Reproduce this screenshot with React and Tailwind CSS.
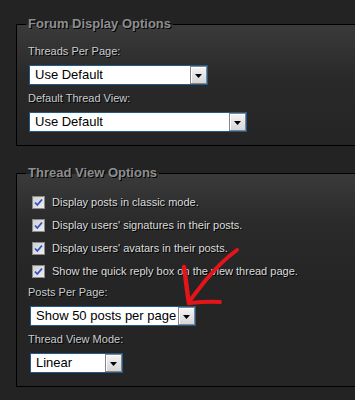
const shadow = "[text-shadow:1px_1px_0_#000]";

function Select({ className, value }) {
  return (
    <div className={`flex h-[20px] border border-[#1f5a8c] bg-white ${className}`}>
      <div className="flex-1 overflow-hidden whitespace-nowrap pl-[5px] text-[13px] leading-[18px] text-black">
        {value}
      </div>
      <div className="flex w-[17px] items-center justify-center border border-[#858585] bg-[linear-gradient(180deg,#f4f4f4,#d6d6d6)] shadow-[inset_1px_1px_0_#fff]">
        <svg width="7" height="4" viewBox="0 0 7 4" className="mt-[1px]">
          <path d="M0 0H7L3.5 4Z" fill="#000" />
        </svg>
      </div>
    </div>
  );
}

function Label({ children, className = "" }) {
  return (
    <div className={`text-[11px] leading-[13px] text-[#c9ccce] ${shadow} ${className}`}>
      {children}
    </div>
  );
}

function Check({ children }) {
  return (
    <div className="flex h-[23px] items-center">
      <span className="ml-[4px] flex h-[13px] w-[13px] items-center justify-center border border-[#8a8a8a] bg-[linear-gradient(135deg,#d0d0d0,#eeeeee)]">
        <svg width="9" height="9" viewBox="0 0 9 9">
          <path d="M1 4.5L3.3 7L8 1.5" fill="none" stroke="#2f50c8" strokeWidth="1.8" />
        </svg>
      </span>
      <span className={`ml-[7px] text-[11px] leading-[13px] text-[#dcdcdc] ${shadow}`}>
        {children}
      </span>
    </div>
  );
}

function Box({ title, className = "", children }) {
  return (
    <fieldset
      className={`w-[400px] border border-black bg-[linear-gradient(180deg,#3a3a3a_0px,#2a2a2a_50px,#252525_110px)] pl-[9px] ${className}`}
    >
      <legend className={`px-[2px] text-[13px] font-bold leading-[16px] text-[#8e8e8e] ${shadow}`}>
        {title}
      </legend>
      {children}
    </fieldset>
  );
}

export default function App() {
  return (
    <div className="relative h-[400px] w-[355px] overflow-hidden bg-[#232323] pl-[16px] pt-[16px] font-['Liberation_Sans',Arial,sans-serif]">
      <Box title="Forum Display Options" className="pb-[13px] pt-[13px]">
        <div className="pl-[2px]">
          <Label>Threads Per Page:</Label>
          <Select className="ml-[1px] mt-[7px] w-[179px]" value="Use Default" />
          <Label className="mt-[7px]">Default Thread View:</Label>
          <Select className="ml-[1px] mt-[7px] w-[218px]" value="Use Default" />
        </div>
      </Box>

      <Box title="Thread View Options" className="mt-[19px] pb-[13px] pt-[10px]">
        <div className="pl-[2px]">
          <Check>Display posts in classic mode.</Check>
          <Check>Display users' signatures in their posts.</Check>
          <Check>Display users' avatars in their posts.</Check>
          <Check>Show the quick reply box on the view thread page.</Check>
          <Label className="mt-[3px]">Posts Per Page:</Label>
          <Select className="ml-[2px] mt-[7px] w-[166px]" value="Show 50 posts per page" />
          <Label className="mt-[7px]">Thread View Mode:</Label>
          <Select className="ml-[2px] mt-[7px] w-[93px]" value="Linear" />
        </div>
      </Box>

      {/* hand-drawn red arrow */}
      <svg className="pointer-events-none absolute left-0 top-0" width="355" height="400">
        <g fill="none" stroke="#e3141a" strokeLinecap="round" strokeLinejoin="round">
          <path d="M237 250 C226 258 214 270 205 281 C198 290 193 296 189 302" strokeWidth="4" />
          <path d="M184 267 C186 280 187 292 189 303" strokeWidth="4.5" />
          <path d="M189 303 C199 302 210 301 220 302" strokeWidth="4" />
        </g>
      </svg>
    </div>
  );
}
